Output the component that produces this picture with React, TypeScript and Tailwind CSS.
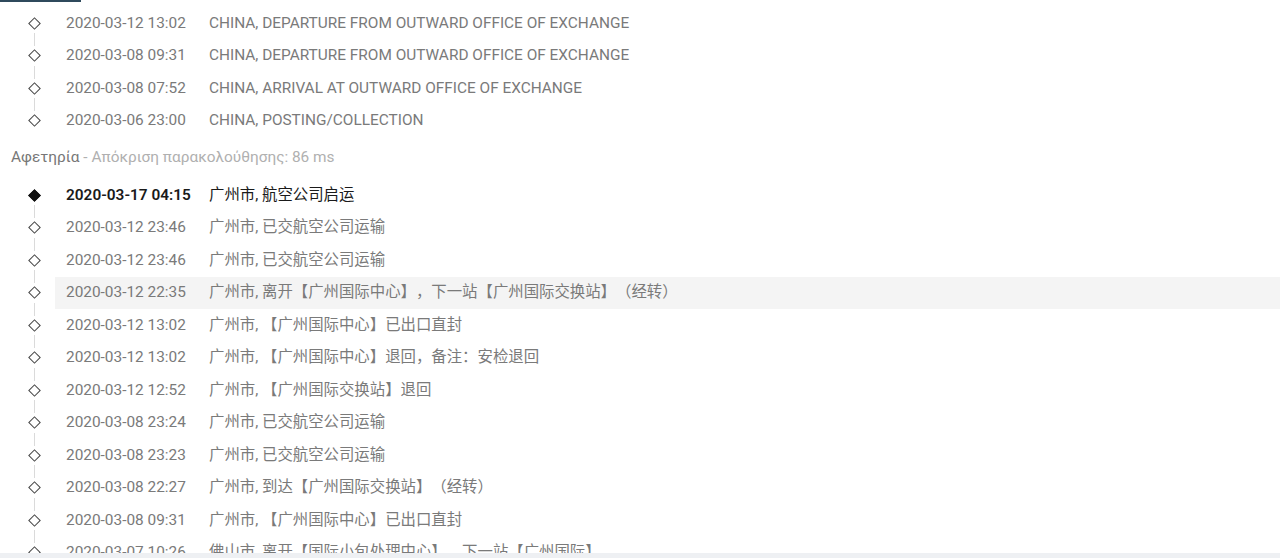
import React from 'react';

type Event = { time: string; text: string; current?: boolean };

const outward: Event[] = [
  { time: '2020-03-12 13:02', text: 'CHINA, DEPARTURE FROM OUTWARD OFFICE OF EXCHANGE' },
  { time: '2020-03-08 09:31', text: 'CHINA, DEPARTURE FROM OUTWARD OFFICE OF EXCHANGE' },
  { time: '2020-03-08 07:52', text: 'CHINA, ARRIVAL AT OUTWARD OFFICE OF EXCHANGE' },
  { time: '2020-03-06 23:00', text: 'CHINA, POSTING/COLLECTION' },
];

const origin: Event[] = [
  { time: '2020-03-17 04:15', text: '广州市, 航空公司启运', current: true },
  { time: '2020-03-12 23:46', text: '广州市, 已交航空公司运输' },
  { time: '2020-03-12 23:46', text: '广州市, 已交航空公司运输' },
  { time: '2020-03-12 22:35', text: '广州市, 离开【广州国际中心】，下一站【广州国际交换站】（经转）' },
  { time: '2020-03-12 13:02', text: '广州市, 【广州国际中心】已出口直封' },
  { time: '2020-03-12 13:02', text: '广州市, 【广州国际中心】退回，备注：安检退回' },
  { time: '2020-03-12 12:52', text: '广州市, 【广州国际交换站】退回' },
  { time: '2020-03-08 23:24', text: '广州市, 已交航空公司运输' },
  { time: '2020-03-08 23:23', text: '广州市, 已交航空公司运输' },
  { time: '2020-03-08 22:27', text: '广州市, 到达【广州国际交换站】（经转）' },
  { time: '2020-03-08 09:31', text: '广州市, 【广州国际中心】已出口直封' },
  { time: '2020-03-07 10:26', text: '佛山市, 离开【国际小包处理中心】，下一站【广州国际】' },
];

const Row = ({ ev, last, hover }: { ev: Event; last: boolean; hover?: boolean }) => (
  <div className="flex h-[32.5px] items-center">
    {/* timeline marker */}
    <div className="relative flex h-full w-[55px] shrink-0 items-center justify-center pl-[13px]">
      <div
        className={`h-[9px] w-[9px] rotate-45 border ${
          ev.current ? 'border-[#111] bg-[#111]' : 'border-[#444] bg-white'
        }`}
      />
      {!last && <div className="absolute left-[33.5px] top-[26px] h-[13px] w-px bg-[#dadada]" />}
    </div>
    <div className={`flex h-full flex-1 items-center pl-[11px] ${hover ? 'bg-[#f4f4f4]' : ''}`}>
      <div
        className={`w-[143px] shrink-0 ${
          ev.current ? 'font-semibold text-[#1a1a1a]' : 'text-[#7a7a7a]'
        }`}
      >
        {ev.time}
      </div>
      <div
        className={`whitespace-nowrap [text-spacing-trim:space-all] ${
          ev.current ? 'text-[#1a1a1a]' : 'text-[#7a7a7a]'
        }`}
      >
        {ev.text}
      </div>
    </div>
  </div>
);

export default function App() {
  return (
    <div
      className="flex h-[558px] w-[1280px] flex-col overflow-hidden bg-white text-[15.4px]"
      style={{ fontFamily: 'Roboto, "Noto Sans CJK SC", sans-serif' }}
    >
      <div className="flex-1 overflow-hidden">
        <div className="h-[2px] w-[81px] bg-[#2f4a5c]" />
        <div className="pt-[5px]">
          {outward.map((ev, i) => (
            <Row key={i} ev={ev} last={i === outward.length - 1} />
          ))}
        </div>
        <div className="flex h-[42px] items-center pl-[11px]">
          <span className="text-[#777]">Αφετηρία</span>
          <span className="ml-1 text-[#b0b0b0]">- Απόκριση παρακολούθησης: 86 ms</span>
        </div>
        <div>
          {origin.map((ev, i) => (
            <Row key={i} ev={ev} last={i === origin.length - 1} hover={i === 3} />
          ))}
        </div>
      </div>
      <div className="h-[5px] shrink-0 bg-[#eef0f3]" />
    </div>
  );
}
